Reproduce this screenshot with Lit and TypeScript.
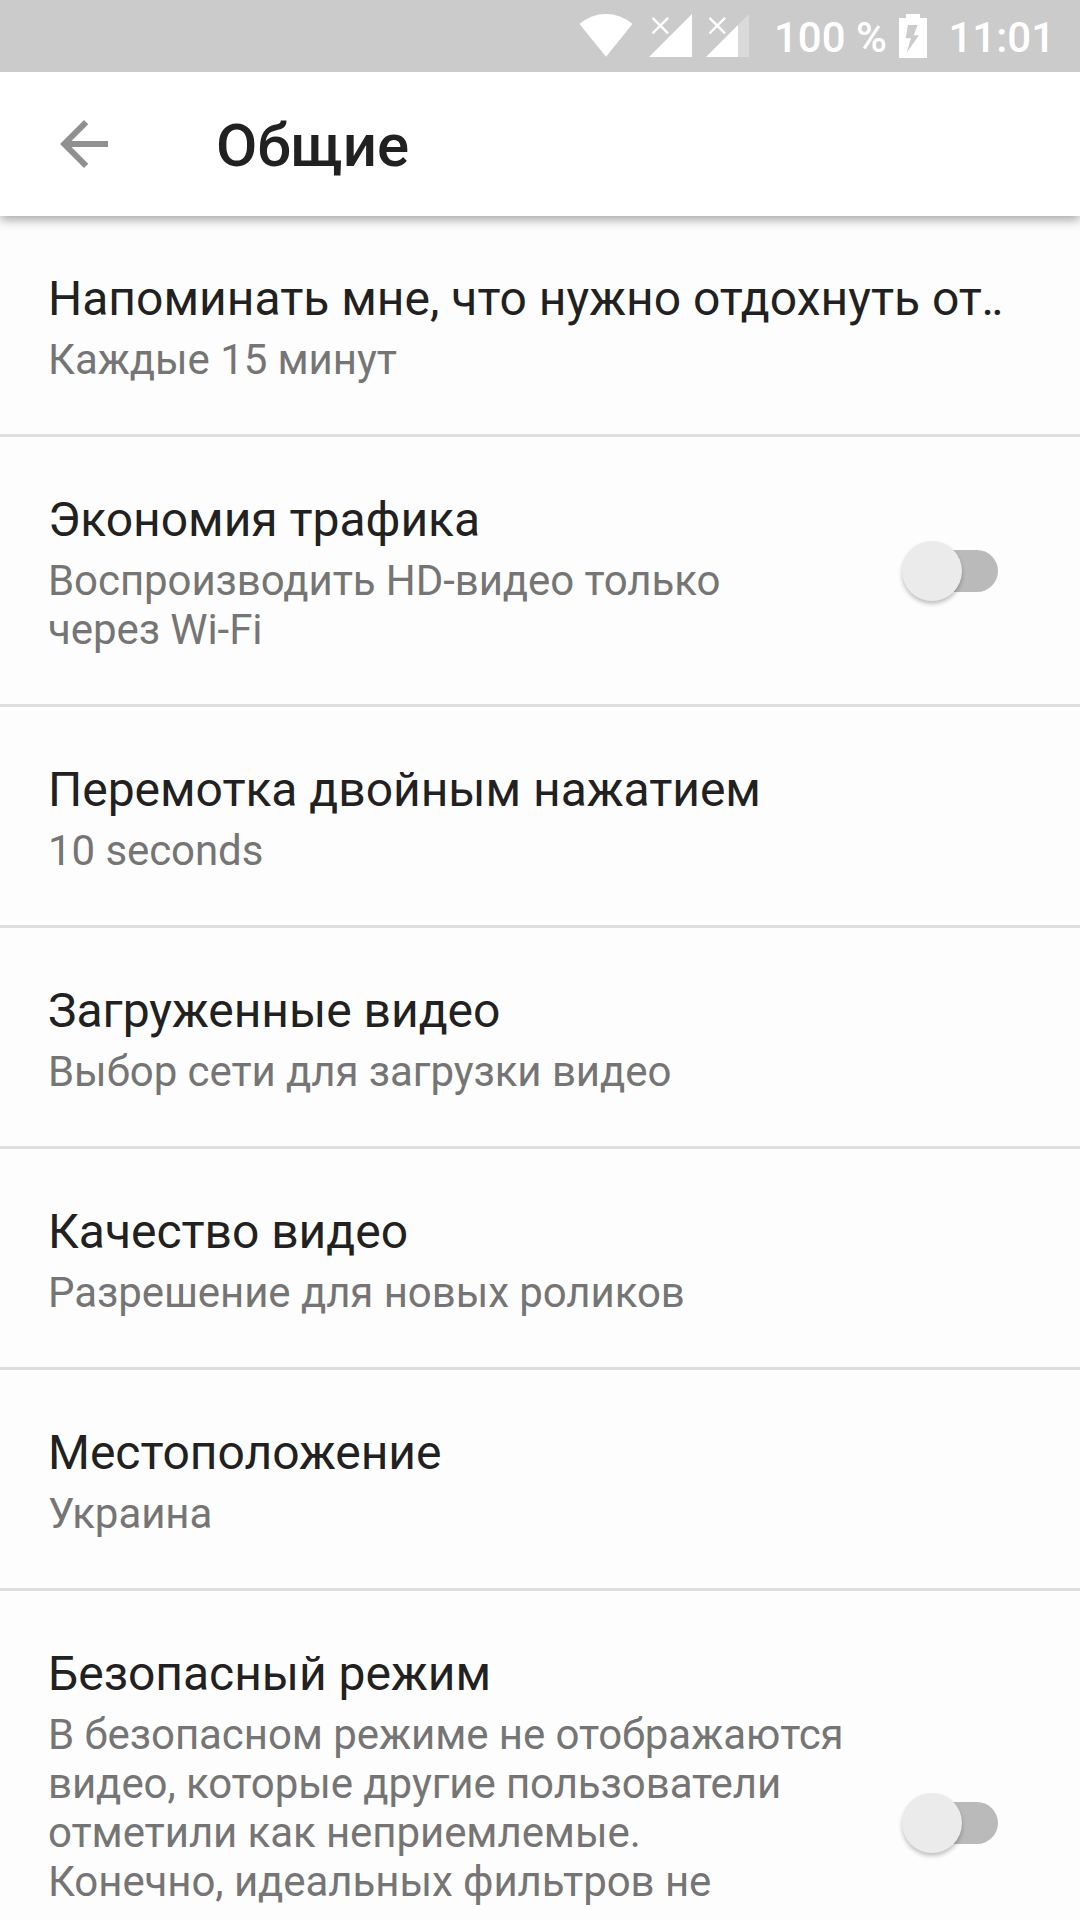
import { LitElement, html, css, svg, nothing } from "lit";
import { customElement, property } from "lit/decorators.js";
import { classMap } from "lit/directives/class-map.js";

interface Setting {
  title: string;
  lines: string[];
  clipped?: boolean;
  toggle?: boolean;
  tall?: boolean;
}

const SETTINGS: Setting[] = [
  { title: "Напоминать мне, что нужно отдохнуть от", clipped: true, lines: ["Каждые 15 минут"] },
  { title: "Экономия трафика", lines: ["Воспроизводить HD-видео только", "через Wi-Fi"], toggle: true },
  { title: "Перемотка двойным нажатием", lines: ["10 seconds"] },
  { title: "Загруженные видео", lines: ["Выбор сети для загрузки видео"] },
  { title: "Качество видео", lines: ["Разрешение для новых роликов"] },
  { title: "Местоположение", lines: ["Украина"] },
  {
    title: "Безопасный режим",
    lines: [
      "В безопасном режиме не отображаются",
      "видео, которые другие пользователи",
      "отметили как неприемлемые.",
      "Конечно, идеальных фильтров не",
    ],
    toggle: true,
    tall: true,
  },
];

@customElement("status-bar")
class StatusBar extends LitElement {
  static styles = css`
    :host {
      display: flex;
      align-items: center;
      justify-content: flex-end;
      box-sizing: border-box;
      height: 72px;
      flex: none;
      padding-right: 25px;
      background: #cbcbcb;
      color: #fff;
      font: 500 42px/72px Roboto, sans-serif;
      white-space: pre;
    }
    svg { display: block; flex: none; }
    .first { margin-left: 15px; }
    .second { margin-left: 11px; }
    .percent { margin: 3px 12.5px 0 23px; }
    .clock { margin: 3px 0 0 21px; }
  `;
  render() {
    const cross = svg`<path d="M4.500 3.800L20.100 19.300M20.100 3.800L4.500 19.300" stroke="#fff" stroke-width="2.400" fill="none"/>`;
    return html`
      <svg width="54" height="44" viewBox="0 0 54 44"><path d="M0.500 10C16 -3.300 38 -3.300 53.500 10L27 42.800Z" fill="#fff"/></svg>
      <svg class="first" width="46" height="44" viewBox="0 0 46 44">${cross}<path d="M1 43L44 0V43Z" fill="#fff"/></svg>
      <svg class="second" width="46" height="44" viewBox="0 0 46 44">${cross}<path d="M33 11L44 0V43H33Z" fill="#fff" opacity=".3"/><path d="M1 43L33 11V43Z" fill="#fff"/></svg>
      <span class="percent">100 %</span>
      <svg width="28" height="44" viewBox="0 0 28 44"><path fill="#fff" fill-rule="evenodd" d="M7 0H21V4H28V44H0V4H7ZM9 11L6.700 24.300H12L7.600 38.700L20 21.300H14.700L18.500 11Z"/></svg>
      <span class="clock">11:01</span>
    `;
  }
}

@customElement("toggle-switch")
class ToggleSwitch extends LitElement {
  static styles = css`
    :host { display: flex; align-items: center; width: 96px; height: 60px; }
    .track {
      display: flex;
      align-items: center;
      box-sizing: border-box;
      width: 84px;
      height: 42px;
      margin-left: 12px;
      border-radius: 21px;
      background: #bababa;
    }
    .thumb {
      flex: none;
      width: 60px;
      height: 60px;
      margin-left: -12px;
      border-radius: 50%;
      background: #ebebeb;
      box-shadow: 0 3px 4px rgba(0, 0, 0, 0.24);
    }
  `;
  render() {
    return html`<div class="track"><div class="thumb"></div></div>`;
  }
}

@customElement("setting-row")
class SettingRow extends LitElement {
  @property({ attribute: false }) item!: Setting;
  static styles = css`
    :host { display: block; border-bottom: 3px solid #dedede; }
    .row {
      display: flex;
      align-items: center;
      justify-content: space-between;
      padding: 0 82px 0 48px;
    }
    .row.tall { height: 463px; }
    .text { align-self: flex-start; padding: 55px 0 50px; }
    .title { margin-bottom: 8px; font-size: 48px; line-height: 56px; color: #212121; white-space: nowrap; letter-spacing: -0.03px; }
    .title.clipped { letter-spacing: 0; }
    .dots { margin-left: -0.5px; letter-spacing: -2.9px; }
    .summary { font-size: 42px; line-height: 49px; color: #757575; white-space: nowrap; letter-spacing: -0.075px; }
  `;
  render() {
    const { title, lines, clipped = false, toggle, tall = false } = this.item;
    return html`
      <div class=${classMap({ row: true, tall })}>
        <div class="text">
          <div class=${classMap({ title: true, clipped })}>${title}${clipped ? html`<span class="dots">..</span>` : nothing}</div>
          ${lines.map((l) => html`<div class="summary">${l}</div>`)}
        </div>
        ${toggle ? html`<toggle-switch></toggle-switch>` : nothing}
      </div>
    `;
  }
}

@customElement("app-root")
class AppRoot extends LitElement {
  static styles = css`
    :host {
      display: flex;
      flex-direction: column;
      width: 1080px;
      height: 1920px;
      overflow: hidden;
      background: #fdfdfd;
      font-family: Roboto, sans-serif;
    }
    .bar {
      display: flex;
      align-items: center;
      flex: none;
      box-sizing: border-box;
      height: 144px;
      padding-left: 60px;
      background: #fff;
      box-shadow: 0 4px 10px rgba(0, 0, 0, 0.34);
      clip-path: inset(0 0 -30px 0);
      z-index: 1;
    }
    .bar svg { display: block; }
    .heading { margin: 4px 0 0 108px; font-size: 60px; line-height: 70px; font-weight: 500; color: #212121; }
    .list { display: flex; flex-direction: column; flex: 1; }
    setting-row { flex: none; }
  `;
  render() {
    return html`
      <status-bar></status-bar>
      <div class="bar">
        <svg width="48" height="48" viewBox="4 4 16 16"><path fill="#909090" d="M20 11H7.830l5.590-5.590L12 4l-8 8 8 8 1.410-1.410L7.830 13H20z"/></svg>
        <div class="heading">Общие</div>
      </div>
      <div class="list">${SETTINGS.map((s) => html`<setting-row .item=${s}></setting-row>`)}</div>
    `;
  }
}
